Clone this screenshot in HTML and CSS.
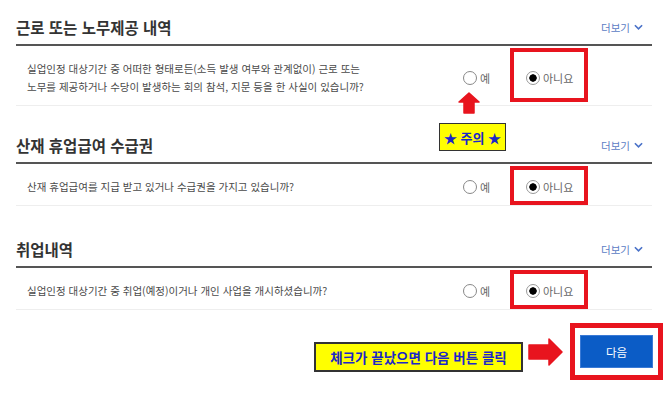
FILE: index.html
```html
<!DOCTYPE html>
<html lang="ko">
<head>
    <meta charset="UTF-8">
    <meta name="viewport" content="width=device-width, initial-scale=1.0">
    <title>근로 또는 노무제공 내역</title>
    <link rel="stylesheet" href="styles.css">
</head>
<body>
    <div class="page">
        <section class="section first">
            <div class="section-head">
                <h2 class="section-title">근로 또는 노무제공 내역</h2>
                <a class="more">더보기 <svg class="chevron" viewBox="0 0 10 6"><path d="M1 1 L5 5 L9 1"/></svg></a>
            </div>
            <div class="question">
                <p class="question-text">실업인정 대상기간 중 어떠한 형태로든(소득 발생 여부와 관계없이) 근로 또는<br>노무를 제공하거나 수당이 발생하는 회의 참석, 지문 등을 한 사실이 있습니까?</p>
                <div class="options">
                    <label class="option option-yes"><span class="radio"></span>예</label>
                    <label class="option"><span class="radio checked"></span>아니요</label>
                </div>
                <span class="mark mark-tall"></span>
                <svg class="arrow-up" viewBox="0 0 22 22"><path d="M11 1 L21 10 H16 V21 H6 V10 H1 Z"/></svg>
                <div class="note note-small">★ 주의 ★</div>
            </div>
        </section>

        <section class="section second">
            <div class="section-head">
                <h2 class="section-title">산재 휴업급여 수급권</h2>
                <a class="more">더보기 <svg class="chevron" viewBox="0 0 10 6"><path d="M1 1 L5 5 L9 1"/></svg></a>
            </div>
            <div class="question">
                <p class="question-text">산재 휴업급여를 지급 받고 있거나 수급권을 가지고 있습니까?</p>
                <div class="options">
                    <label class="option option-yes"><span class="radio"></span>예</label>
                    <label class="option"><span class="radio checked"></span>아니요</label>
                </div>
                <span class="mark"></span>
            </div>
        </section>

        <section class="section third">
            <div class="section-head">
                <h2 class="section-title">취업내역</h2>
                <a class="more">더보기 <svg class="chevron" viewBox="0 0 10 6"><path d="M1 1 L5 5 L9 1"/></svg></a>
            </div>
            <div class="question">
                <p class="question-text">실업인정 대상기간 중 취업(예정)이거나 개인 사업을 개시하셨습니까?</p>
                <div class="options">
                    <label class="option option-yes"><span class="radio"></span>예</label>
                    <label class="option"><span class="radio checked"></span>아니요</label>
                </div>
                <span class="mark"></span>
            </div>
        </section>

        <div class="footer">
            <div class="note note-big">체크가 끝났으면 다음 버튼 클릭</div>
            <svg class="arrow-right" viewBox="0 0 35 28"><path d="M1 7 H21 V1 L34 14 L21 27 V21 H1 Z"/></svg>
            <div class="button-mark">
                <button class="next-button">다음</button>
            </div>
        </div>
    </div>
</body>
</html>
```

FILE: styles.css
```css
body {
    margin: 0;
    background-color: #fff;
    font-family: "Noto Sans CJK KR", "Noto Sans", sans-serif;
    color: #333;
}

.page {
    width: 636px;
    margin-left: 16px;
}

.section.first {
    margin-top: 17px;
}

.section.second {
    margin-top: 29px;
}

.section.third {
    margin-top: 33px;
}

.section-head {
    display: flex;
    justify-content: space-between;
    align-items: center;
    padding-bottom: 7px;
    border-bottom: 2px solid #555;
}

.section-title {
    margin: 0;
    font-size: 15.5px;
    line-height: 20px;
    font-weight: bold;
    color: #333;
}

.more {
    display: flex;
    align-items: center;
    gap: 4px;
    margin-right: 9px;
    font-size: 10.5px;
    color: #5b7cc4;
}

.chevron {
    width: 9px;
    height: 6px;
    fill: none;
    stroke: #4a72c8;
    stroke-width: 1.8;
}

.question {
    position: relative;
    display: flex;
    align-items: center;
    padding: 14px 0 9px 11px;
    border-bottom: 1px solid #eee;
}

.question-text {
    flex: 1;
    margin: 0;
    font-size: 10.5px;
    line-height: 18px;
    color: #4a4a4a;
}

.options {
    display: flex;
    align-items: center;
    width: 189px;
    font-size: 11px;
    color: #666;
}

.option {
    display: flex;
    align-items: center;
    gap: 3px;
}

.option-yes {
    width: 63px;
}

.radio {
    box-sizing: border-box;
    width: 14px;
    height: 14px;
    border: 1px solid #888;
    border-radius: 50%;
    background-color: #fff;
}

.radio.checked {
    border-color: #999;
    background: radial-gradient(circle, #000 3.4px, #fff 4px);
}

.mark {
    position: absolute;
    left: 494px;
    top: 2px;
    bottom: 0;
    width: 78px;
    box-sizing: border-box;
    border: 4px solid #e8141e;
}

.mark-tall {
    bottom: 3px;
}

.arrow-up {
    position: absolute;
    left: 442px;
    top: 46px;
    width: 22px;
    height: 22px;
    fill: #e8141e;
    stroke: #e8141e;
    stroke-width: 1.5;
    stroke-linejoin: round;
}

.note {
    display: flex;
    justify-content: center;
    align-items: center;
    box-sizing: border-box;
    background-color: #ffff00;
    color: #1b27c9;
    font-weight: bold;
}

.note-small {
    position: absolute;
    left: 423px;
    top: 77px;
    width: 67px;
    height: 28px;
    border: 1px solid #333;
    font-size: 13px;
}

.footer {
    display: flex;
    justify-content: flex-end;
    align-items: center;
    margin-top: 13px;
    margin-right: -11px;
}

.note-big {
    align-self: flex-end;
    width: 209px;
    height: 30px;
    margin-bottom: 8px;
    border: 2px solid #333;
    font-size: 13.5px;
}

.arrow-right {
    width: 35px;
    height: 28px;
    margin-left: 5px;
    margin-right: 7px;
    fill: #e8141e;
    stroke: #e8141e;
    stroke-width: 1.5;
    stroke-linejoin: round;
}

.button-mark {
    padding: 7px 5px;
    border: 5px solid #e8141e;
}

.next-button {
    display: block;
    width: 73px;
    height: 33px;
    border: 1px solid #3a7ad6;
    background-color: #0b5cc6;
    color: #fff;
    font-family: inherit;
    font-size: 11.5px;
}
```
